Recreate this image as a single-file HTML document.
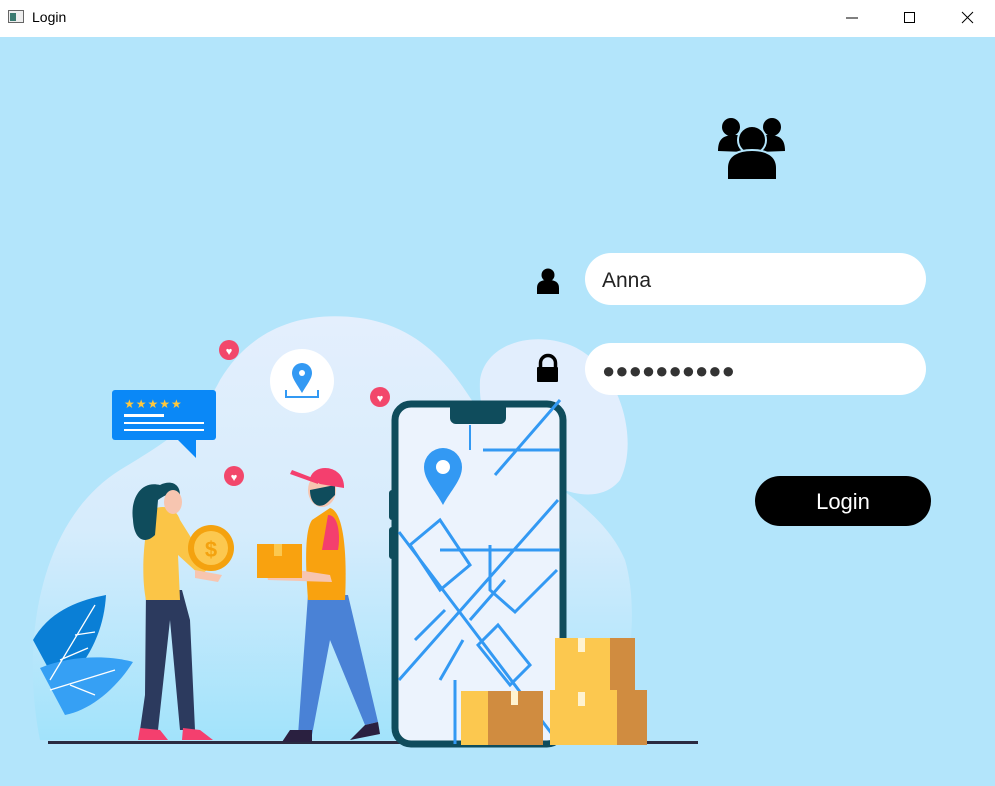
<!DOCTYPE html>
<html><head><meta charset="utf-8"><style>
*{margin:0;padding:0;box-sizing:border-box}
body{width:995px;height:786px;overflow:hidden;background:#b3e5fb;font-family:"Segoe UI","Liberation Sans",sans-serif;position:relative}
.tb{position:absolute;left:0;top:0;width:995px;height:37px;background:#fff;font-size:14px;color:#000}
.tb .t{position:absolute;left:32px;top:9px;font-size:14px}
.inp{position:absolute;left:585px;width:341px;height:52px;background:#fff;border-radius:26px;font-size:21px;color:#222;padding-left:17px;line-height:55px}
.btn{position:absolute;left:755px;top:476px;width:176px;height:50px;background:#000;border-radius:25px;color:#fff;font-size:22px;text-align:center;line-height:51px}
svg{position:absolute;left:0;top:0}
</style></head><body>
<svg width="995" height="786" viewBox="0 0 995 786">
<defs><linearGradient id="g" x1="0" y1="0" x2="0" y2="1"><stop offset="0" stop-color="#e4effd"/><stop offset="0.5" stop-color="#d6ecfc"/><stop offset="1" stop-color="#a2e3fb"/></linearGradient></defs>
<path d="M40 740 C20 640 40 520 120 470 C170 440 200 420 220 380 C250 330 300 310 360 318 C430 328 460 380 490 430 C520 470 600 500 625 560 C640 610 630 700 600 740 Z" fill="url(#g)"/>
<path d="M480 380 C485 345 530 330 570 345 C620 365 640 440 620 480 C600 505 560 495 530 470 C495 445 478 420 480 380 Z" fill="#e2eefd"/>
<rect x="48" y="741" width="650" height="3" fill="#2a2a40"/>
<path d="M33 640 C50 610 80 600 106 595 C104 630 90 660 60 690 Z" fill="#0a7fd6"/>
<path d="M40 668 C70 655 110 655 133 662 C115 690 90 710 65 715 Z" fill="#36a0f4"/>
<path d="M95 605 L50 680 M60 660 L88 648 M75 635 L95 632 M50 690 L115 670 M70 685 L95 695" stroke="#fff" stroke-width="1.3" fill="none"/>
<rect x="112" y="390" width="104" height="50" rx="3" fill="#0a88f7"/>
<path d="M178 440 L196 458 L196 440 Z" fill="#0a88f7"/>
<text x="124" y="408" font-size="12" fill="#ffc83d" letter-spacing="1">★★★★★</text>
<rect x="124" y="414" width="40" height="3" fill="#fff"/><rect x="124" y="422" width="80" height="2" fill="#fff"/><rect x="124" y="429" width="80" height="2" fill="#fff"/>
<circle cx="229" cy="350" r="10" fill="#f2476b"/><circle cx="380" cy="397" r="10" fill="#f2476b"/><circle cx="234" cy="476" r="10" fill="#f2476b"/>
<text x="229" y="355" font-size="11" fill="#fff" text-anchor="middle">♥</text><text x="380" y="402" font-size="11" fill="#fff" text-anchor="middle">♥</text><text x="234" y="481" font-size="11" fill="#fff" text-anchor="middle">♥</text>
<circle cx="302" cy="381" r="32" fill="#fff"/>
<path d="M302 393 C296 383 292 378 292 373 A10 10 0 0 1 312 373 C312 378 308 383 302 393Z" fill="#3399f3"/><circle cx="302" cy="373" r="3" fill="#fff"/>
<path d="M286 390 V397 H318 V390" stroke="#3399f3" stroke-width="2" fill="none"/>
<rect x="389" y="490" width="8" height="30" rx="3" fill="#0f4c5c"/><rect x="389" y="527" width="8" height="32" rx="3" fill="#0f4c5c"/>
<rect x="395" y="404" width="168" height="340" rx="16" fill="#ecf3fd" stroke="#0f4c5c" stroke-width="7"/>
<path d="M450 404 H506 V418 A6 6 0 0 1 500 424 H456 A6 6 0 0 1 450 418Z" fill="#0f4c5c"/>
<g stroke="#3399f3" stroke-width="3" fill="none">
<path d="M399 532 L558 742 M399 680 L558 500 M483 450 H560 M495 475 L560 400 M440 550 H560 M490 545 V590 L515 612 L557 570 M455 680 V744 M410 545 L440 520 L470 565 L440 590Z M415 640 L445 610 M470 620 L505 580 M478 645 L498 625 L530 665 L510 685Z M463 640 L440 680"/>
</g>
<path d="M470 425 L470 450" stroke="#3399f3" stroke-width="2"/>
<path d="M443 505 C435 490 424 480 424 467 A19 19 0 0 1 462 467 C462 480 451 490 443 505Z" fill="#3399f3"/><circle cx="443" cy="467" r="7" fill="#fff"/>
<rect x="555" y="638" width="80" height="54" fill="#fcc84f"/><rect x="610" y="638" width="25" height="54" fill="#d08c40"/><rect x="578" y="638" width="7" height="14" fill="#fff3d0"/>
<rect x="550" y="690" width="97" height="55" fill="#fcc84f"/><rect x="617" y="690" width="30" height="55" fill="#d08c40"/><rect x="578" y="692" width="7" height="14" fill="#fff3d0"/>
<rect x="461" y="691" width="82" height="54" fill="#fcc84f"/><rect x="488" y="691" width="55" height="54" fill="#d08c40"/><rect x="511" y="691" width="7" height="14" fill="#fff3d0"/>
<path d="M145 695 L140 730 L158 730 L170 620 L180 730 L195 730 L190 620 L182 590 L146 590 Z" fill="#2c3a5e"/>
<path d="M138 740 L140 728 L160 730 L168 740Z M182 740 L183 728 L200 730 L213 740Z" fill="#f43f6e"/>
<path d="M152 510 C145 525 140 570 146 600 L180 600 L178 555 L200 575 L210 568 L180 520 C175 505 160 505 152 510Z" fill="#fbc547"/>
<path d="M160 485 C140 480 130 500 133 520 C134 540 145 545 155 535 L158 500 C165 495 175 490 180 495 C180 483 170 480 160 485Z" fill="#0f4c5c"/>
<ellipse cx="173" cy="502" rx="9" ry="12" fill="#f7c5b0"/>
<circle cx="211" cy="548" r="23" fill="#f4a20f"/><circle cx="211" cy="548" r="17" fill="#fcc84f"/><text x="211" y="557" font-size="22" fill="#f4a20f" text-anchor="middle" font-weight="bold">$</text>
<path d="M195 570 L222 575 L218 582 L195 578Z" fill="#f7c5b0"/>
<path d="M308 595 L298 735 L312 735 L330 640 L365 725 L378 722 L348 595 Z" fill="#4a82d6"/>
<path d="M282 742 L290 730 L312 730 L312 742Z M350 740 L365 725 L378 722 L380 734Z" fill="#2a2040"/>
<path d="M312 520 L330 508 C345 512 347 560 345 600 L308 600 C305 560 305 530 312 520Z" fill="#f9a20f"/>
<path d="M328 515 C340 515 340 540 338 550 L322 550 Z" fill="#f43f6e"/>
<path d="M265 565 L330 575 L332 582 L268 580Z" fill="#f7c5b0"/>
<rect x="257" y="544" width="45" height="34" fill="#f9a20f"/><rect x="274" y="544" width="8" height="12" fill="#fcc84f"/>
<ellipse cx="322" cy="490" rx="14" ry="17" fill="#f7c5b0"/>
<path d="M310 490 C310 505 320 510 328 502 L335 495 L335 485 L320 488Z" fill="#0f4c5c"/>
<path d="M310 478 C315 462 345 465 344 488 L320 484Z" fill="#f43f6e"/><path d="M292 470 L318 480 L318 484 L290 474Z" fill="#f43f6e"/>
<circle cx="548" cy="275" r="6.5" fill="#000"/><path d="M537 294 V288 C537 282 541 280 548 280 C555 280 559 282 559 288 V294 Z" fill="#000"/>
<path d="M540.5 368 V363 A7.5 7.5 0 0 1 555.5 363 V368" stroke="#000" stroke-width="3.5" fill="none"/><rect x="537" y="367" width="21" height="15" rx="1" fill="#000"/>
<circle cx="731" cy="127" r="9" fill="#000"/><circle cx="772" cy="127" r="9" fill="#000"/>
<path d="M718 151 C718 138 724 135 736 135 C745 135 745 145 745 152 Z M785 151 C785 138 779 135 767 135 C758 135 758 145 758 152 Z" fill="#000"/>
<circle cx="752" cy="140" r="14" fill="#000" stroke="#b3e5fb" stroke-width="2"/>
<path d="M727 180 V168 C727 155 738 150 752 150 C766 150 777 155 777 168 V180 Z" fill="#000" stroke="#b3e5fb" stroke-width="2"/>
</svg>
<div class="tb"><svg width="16" height="14" style="left:8px;top:10px"><rect x="0.5" y="0.5" width="15" height="12" fill="#eee" stroke="#666"/><rect x="2" y="3" width="6" height="8" fill="#3a7a70"/></svg><span class="t">Login</span>
<svg width="140" height="37" style="left:840px;top:0"><path d="M6 18 H18" stroke="#000"/><rect x="64.5" y="12.5" width="10" height="10" fill="none" stroke="#000"/><path d="M122 12 L133 23 M133 12 L122 23" stroke="#000"/></svg></div>
<div class="inp" style="top:253px">Anna</div>
<div class="inp" style="top:343px;letter-spacing:0px;font-size:22px;color:#333">●●●●●●●●●●</div>
<div class="btn">Login</div>
</body></html>
